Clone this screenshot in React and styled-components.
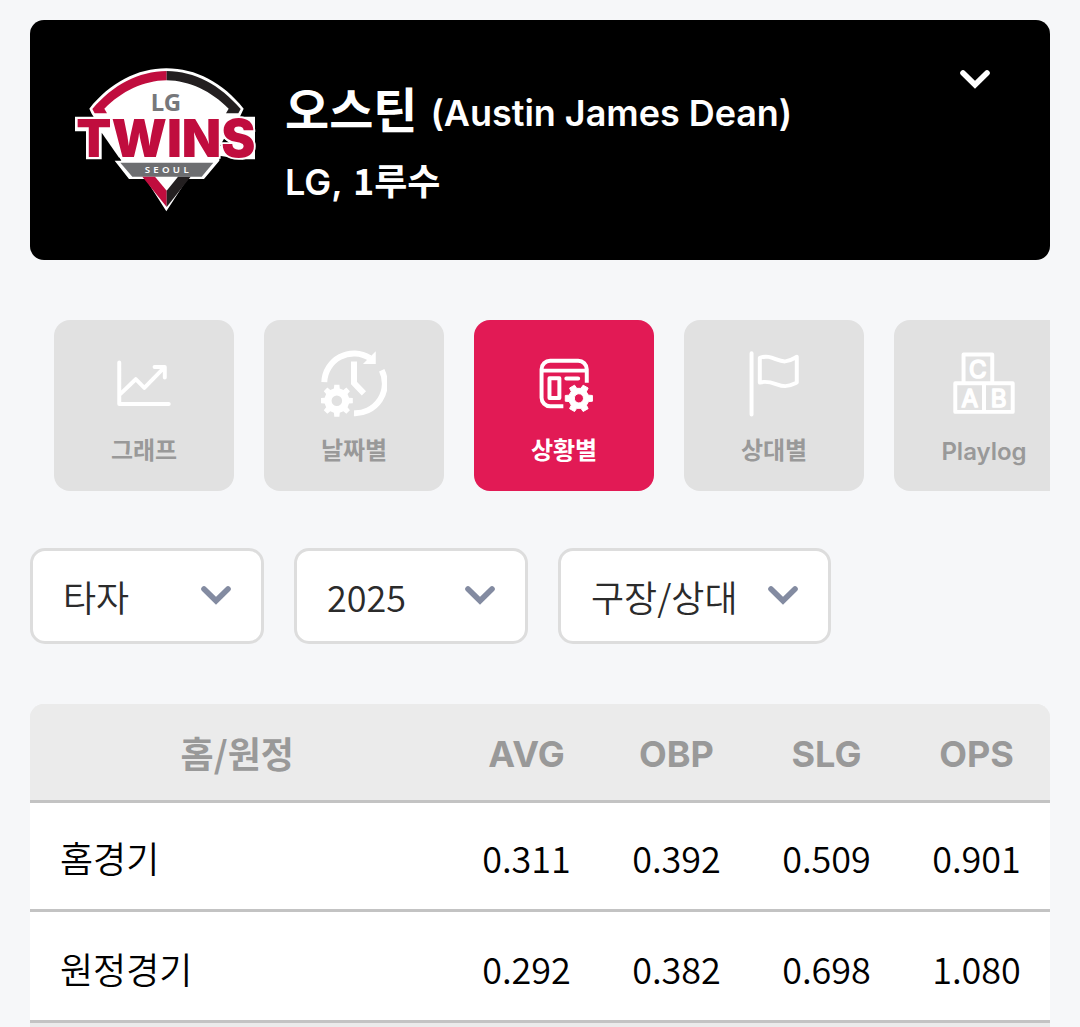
import React from 'react'
import styled, { createGlobalStyle } from 'styled-components'

const GlobalStyle = createGlobalStyle`
    * {
        box-sizing: border-box;
    }
    body {
        margin: 0;
        background-color: #f6f7f9;
        font-family: "Noto Sans CJK KR", sans-serif;
        font-weight: 350;
        overflow: hidden;
    }
`;

const Page = styled.div`
    width: 1080px;
    height: 1027px;
    padding: 20px 30px 0;
    overflow: hidden;
`;

const Latin = styled.span`
    font-family: Inter, sans-serif;
`;

const PlayerCard = styled.header`
    display: flex;
    align-items: flex-start;
    height: 240px;
    padding: 48px 60px 0 45px;
    border-radius: 14px;
    color: #fff;
    background-color: #000;
`;

const PlayerInfo = styled.div`
    flex: 1;
    padding-left: 30px;
    font-weight: 700;
    white-space: nowrap;
`;

const PlayerName = styled.div`
    display: flex;
    align-items: center;
    gap: 13px;
    height: 79px;
    font-size: 48px;
    line-height: 79px;

    ${Latin} {
        padding-top: 11px;
        font-size: 36px;
        font-weight: 600;
        line-height: 60px;
        letter-spacing: -0.04px;
    }
`;

const PlayerTeam = styled.div`
    font-size: 36px;
    line-height: 60px;
    margin-top: 2px;

    ${Latin} {
        font-weight: 600;
        margin-right: 2px;
    }
`;

const Tabs = styled.nav`
    display: flex;
    gap: 30px;
    margin-top: 60px;
    padding-left: 24px;
    overflow: hidden;
`;

const Tab = styled.div`
    flex: none;
    display: flex;
    flex-direction: column;
    align-items: center;
    width: 180px;
    height: 171px;
    padding-top: 30px;
    border-radius: 16px;
    color: ${({ $active }) => ($active ? '#fff' : '#999')};
    background-color: ${({ $active }) => ($active ? '#e21a55' : '#e1e1e1')};
`;

const TabIcon = styled.svg`
    width: 66px;
    height: 67px;
    fill: none;
    stroke: #fff;
    stroke-width: 12;
    stroke-linecap: round;
    stroke-linejoin: round;
`;

const TabLabel = styled.div`
    margin-top: ${({ $latin }) => ($latin ? '17px' : '14px')};
    font-family: ${({ $latin }) => ($latin ? 'Inter' : '"Noto Sans CJK KR"')}, sans-serif;
    font-size: 24px;
    font-weight: ${({ $latin }) => ($latin ? 600 : 700)};
    line-height: 36px;
`;

const Filters = styled.div`
    display: flex;
    gap: 30px;
    margin-top: 57px;
`;

const Select = styled.div`
    display: flex;
    align-items: center;
    justify-content: space-between;
    width: ${({ $wide }) => ($wide ? '273px' : '234px')};
    height: 96px;
    padding: 0 30px;
    border: 3px solid #ddd;
    border-radius: 15px;
    font-size: 36px;
    line-height: 54px;
    color: #2b2b2b;
    background-color: #fff;
    white-space: nowrap;
`;

const ChevronSvg = styled.svg`
    flex: none;
    width: 30px;
    height: 22px;
    margin-top: ${({ $top }) => $top || 0}px;
    fill: none;
    stroke: ${({ $color }) => $color};
    stroke-width: 5.6;
    stroke-linecap: round;
`;

const Table = styled.div`
    margin-top: 60px;
    border-radius: 14px 14px 0 0;
    overflow: hidden;
    background-color: #ebebeb;
`;

const Row = styled.div`
    display: grid;
    grid-template-columns: 421.5px repeat(4, 150px);
    align-items: center;
    height: ${({ $height }) => $height}px;
    padding-top: ${({ $height }) => ($height > 110 ? 4 : 2)}px;
    border-bottom: 3px solid #c3c3c3;
    font-size: 36px;
    line-height: 54px;
    color: #000;
    background-color: #fff;
`;

const HeadRow = styled(Row)`
    padding-top: 0;
    font-weight: 700;
    color: #999;
    background-color: #ebebeb;
`;

const Cell = styled.div`
    text-align: center;
`;

const TitleCell = styled(Cell)`
    padding-right: 7px;
`;

const NameCell = styled.div`
    padding-left: 30px;
`;

const NextSection = styled.div`
    height: 40px;
`;

const LogoSvg = styled.svg`
    flex: none;
    width: 180px;
    height: 144px;
    overflow: visible;
`;

// Gear outline with a round hole, drawn with the evenodd rule
const gearPath = (cx, cy, teeth, outer, inner, hole) => {
    const step = (Math.PI * 2) / teeth
    const points = []
    for (let i = 0; i < teeth; i++) {
        const a = i * step
        const corners = [[-0.3, inner], [-0.2, outer], [0.2, outer], [0.3, inner]]
        corners.forEach(([offset, r]) => {
            const t = a + offset * step
            points.push(`${(cx + r * Math.cos(t)).toFixed(1)} ${(cy + r * Math.sin(t)).toFixed(1)}`)
        })
    }
    return `M${points.join('L')}ZM${cx - hole} ${cy}a${hole} ${hole} 0 1 0 ${hole * 2} 0a${hole} ${hole} 0 1 0 ${-hole * 2} 0Z`
}

const Chevron = ({ color, top }) => (
    <ChevronSvg $color={color} $top={top} viewBox="0 0 30 22">
        <path d="M3 3.9L15 15.8L27 3.9" />
    </ChevronSvg>
)

const TwinsLogo = () => (
    <LogoSvg viewBox="45 38 540 432">
        <path fill="#fff" d="M88 160C150 82 232 39 319 39C408 39 489 82 551 160L538 188L478 300V316L432 371H382L319 468L257 371H207L164 316H184L95 175Z" />
        <path fill="#c00d3e" d="M97 161C160 88 235 48 320 47V75C250 76 185 108 133 160L141 174H104Z" />
        <path fill="#231f20" d="M542 161C479 88 405 48 320 47V75C389 76 454 108 506 160L498 174H535Z" />
        <text x="318" y="166" textAnchor="middle" fontFamily="Noto Sans" fontWeight="700" fontSize="72" fill="#77787b">LG</text>
        <path fill="#fff" d="M45 184H585V312H548L478 301H184L171 312H78V228H45Z" />
        <path fill="#000" d="M125 232L182 314H125Z" />
        <path fill="#000" d="M492 250L480 272H520Z" />
        <text
            x="49"
            y="305"
            textLength="537"
            lengthAdjust="spacingAndGlyphs"
            fontFamily="Inter"
            fontWeight="900"
            fontSize="155"
            fill="#c00d3e"
            stroke="#fff"
            strokeWidth="11"
            paintOrder="stroke"
        >
            TWINS
        </text>
        <path fill="#6d6e71" d="M181 322H460L425 364H217Z" />
        <text x="254" y="354" textLength="132" fontFamily="Noto Sans" fontWeight="600" fontSize="29" fill="#fff">SEOUL</text>
        <path fill="#c00d3e" d="M247 364H285L320 406V455Z" />
        <path fill="#231f20" d="M392 364H354L320 406V455Z" />
    </LogoSvg>
)

const GraphIcon = () => (
    <TabIcon viewBox="0 0 200 200">
        <path d="M25 36V162H175M28 132L75 87L101 113L161 52M132 50H163V82" />
    </TabIcon>
)

const DateIcon = () => (
    <TabIcon viewBox="0 0 200 200">
        <g strokeWidth="18" strokeLinecap="butt" strokeLinejoin="miter">
            <path d="M10 96A90 90 0 0 1 148 23M184 60A90 90 0 0 1 100 190M100 33V99L130 130" />
        </g>
        <path d="M166 2V41H127Z" fill="#fff" stroke="none" />
        <path d={gearPath(48, 152, 8, 49, 38, 16)} fill="#fff" fillRule="evenodd" stroke="none" />
    </TabIcon>
)

const SituationIcon = () => (
    <TabIcon viewBox="0 0 200 200">
        <path
            strokeLinecap="butt"
            d="M169 98V57A26 26 0 0 0 143 31H58A26 26 0 0 0 32 57V143A26 26 0 0 0 58 169H98M32 61H169"
        />
        <path d="M56 84H86V144H56ZM107 85H143" />
        <path d={gearPath(145, 145, 6, 42, 31, 14)} fill="#fff" fillRule="evenodd" stroke="#fff" strokeWidth="3" />
    </TabIcon>
)

const FlagIcon = () => (
    <TabIcon viewBox="0 0 200 200">
        <path d="M32 8V194M57 22C90 10 108 34 134 33C150 32 158 25 169 19V97C158 102 150 108 134 108C108 108 92 88 57 97Z" />
    </TabIcon>
)

const BlocksIcon = () => (
    <TabIcon viewBox="0 0 200 200">
        <path d="M38 99V12H125V99M13 99H187V186H13ZM100 99V186" />
        <g fill="#fff" strokeWidth="5" fontFamily="Inter" fontWeight="400" fontSize="73" textAnchor="middle">
            <text x="81" y="84">C</text>
            <text x="57" y="170">A</text>
            <text x="144" y="170">B</text>
        </g>
    </TabIcon>
)

const tabs = [
    { label: '그래프', Icon: GraphIcon },
    { label: '날짜별', Icon: DateIcon },
    { label: '상황별', Icon: SituationIcon, active: true },
    { label: '상대별', Icon: FlagIcon },
    { label: 'Playlog', Icon: BlocksIcon, latin: true },
]

const filters = [
    { label: '타자' },
    { label: '2025' },
    { label: '구장/상대', wide: true },
]

const columns = ['AVG', 'OBP', 'SLG', 'OPS']

const rows = [
    { name: '홈경기', height: 109, values: ['0.311', '0.392', '0.509', '0.901'] },
    { name: '원정경기', height: 111, values: ['0.292', '0.382', '0.698', '1.080'] },
]

const App = () => {
    return (
        <Page>
            <GlobalStyle />
            <PlayerCard>
                <TwinsLogo />
                <PlayerInfo>
                    <PlayerName>오스틴 <Latin>(Austin James Dean)</Latin></PlayerName>
                    <PlayerTeam><Latin>LG,</Latin> 1루수</PlayerTeam>
                </PlayerInfo>
                <Chevron color="#fff" top={1} />
            </PlayerCard>

            <Tabs>
                {tabs.map(({ label, Icon, active, latin }) => (
                    <Tab key={label} $active={active}>
                        <Icon />
                        <TabLabel $latin={latin}>{label}</TabLabel>
                    </Tab>
                ))}
            </Tabs>

            <Filters>
                {filters.map(({ label, wide }) => (
                    <Select key={label} $wide={wide}>
                        {label}
                        <Chevron color="#838ba1" />
                    </Select>
                ))}
            </Filters>

            <Table>
                <HeadRow $height={99}>
                    <TitleCell>홈/원정</TitleCell>
                    {columns.map((column) => (
                        <Cell key={column}><Latin>{column}</Latin></Cell>
                    ))}
                </HeadRow>
                {rows.map(({ name, height, values }) => (
                    <Row key={name} $height={height}>
                        <NameCell>{name}</NameCell>
                        {values.map((value, i) => (
                            <Cell key={columns[i]}>{value}</Cell>
                        ))}
                    </Row>
                ))}
                <NextSection />
            </Table>
        </Page>
    )
}

export default App
